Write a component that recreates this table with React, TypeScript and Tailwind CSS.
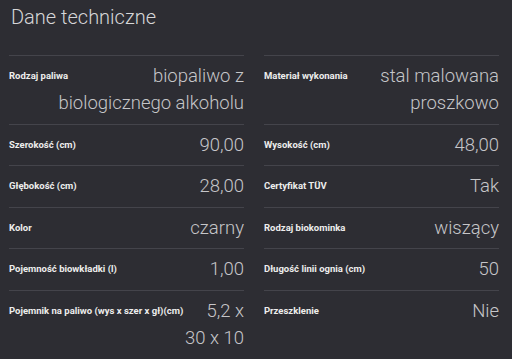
import React from "react";

type Spec = { label: string; value: string };

const left: Spec[] = [
  { label: "Rodzaj paliwa", value: "biopaliwo z biologicznego alkoholu" },
  { label: "Szerokość (cm)", value: "90,00" },
  { label: "Głębokość (cm)", value: "28,00" },
  { label: "Kolor", value: "czarny" },
  { label: "Pojemność biowkładki (l)", value: "1,00" },
  { label: "Pojemnik na paliwo (wys x szer x gł)(cm)", value: "5,2 x 30 x 10" },
];

const right: Spec[] = [
  { label: "Materiał wykonania", value: "stal malowana proszkowo" },
  { label: "Wysokość (cm)", value: "48,00" },
  { label: "Certyfikat TÜV", value: "Tak" },
  { label: "Rodzaj biokominka", value: "wiszący" },
  { label: "Długość linii ognia (cm)", value: "50" },
  { label: "Przeszklenie", value: "Nie" },
];

function Row({ label, value }: Spec) {
  return (
    <div className="border-t border-[#44444b] pt-[7px] pb-[6.5px]">
      <span className="float-left mr-3 text-[9.5px] font-bold leading-[25px] text-[#ededed]">
        {label}
      </span>
      <div className="text-right text-[18.5px] font-light leading-[27px] text-[#c6c6c9]">
        {value}
      </div>
    </div>
  );
}

function Column({ items }: { items: Spec[] }) {
  return (
    <div className="flex flex-col">
      {items.map((s) => (
        <Row key={s.label} {...s} />
      ))}
    </div>
  );
}

export default function App() {
  return (
    <div
      className="h-[359px] w-[512px] overflow-hidden bg-[#2d2d33] pl-[9px] pr-[13px]"
      style={{ fontFamily: "Roboto, 'Noto Sans', sans-serif" }}
    >
      <h2 className="pt-[3px] pl-[2px] text-[20px] font-light leading-[28px] text-[#d6d6d8]">
        Dane techniczne
      </h2>
      <div className="mt-[24px] grid grid-cols-2 gap-x-[20px]">
        <Column items={left} />
        <Column items={right} />
      </div>
    </div>
  );
}
